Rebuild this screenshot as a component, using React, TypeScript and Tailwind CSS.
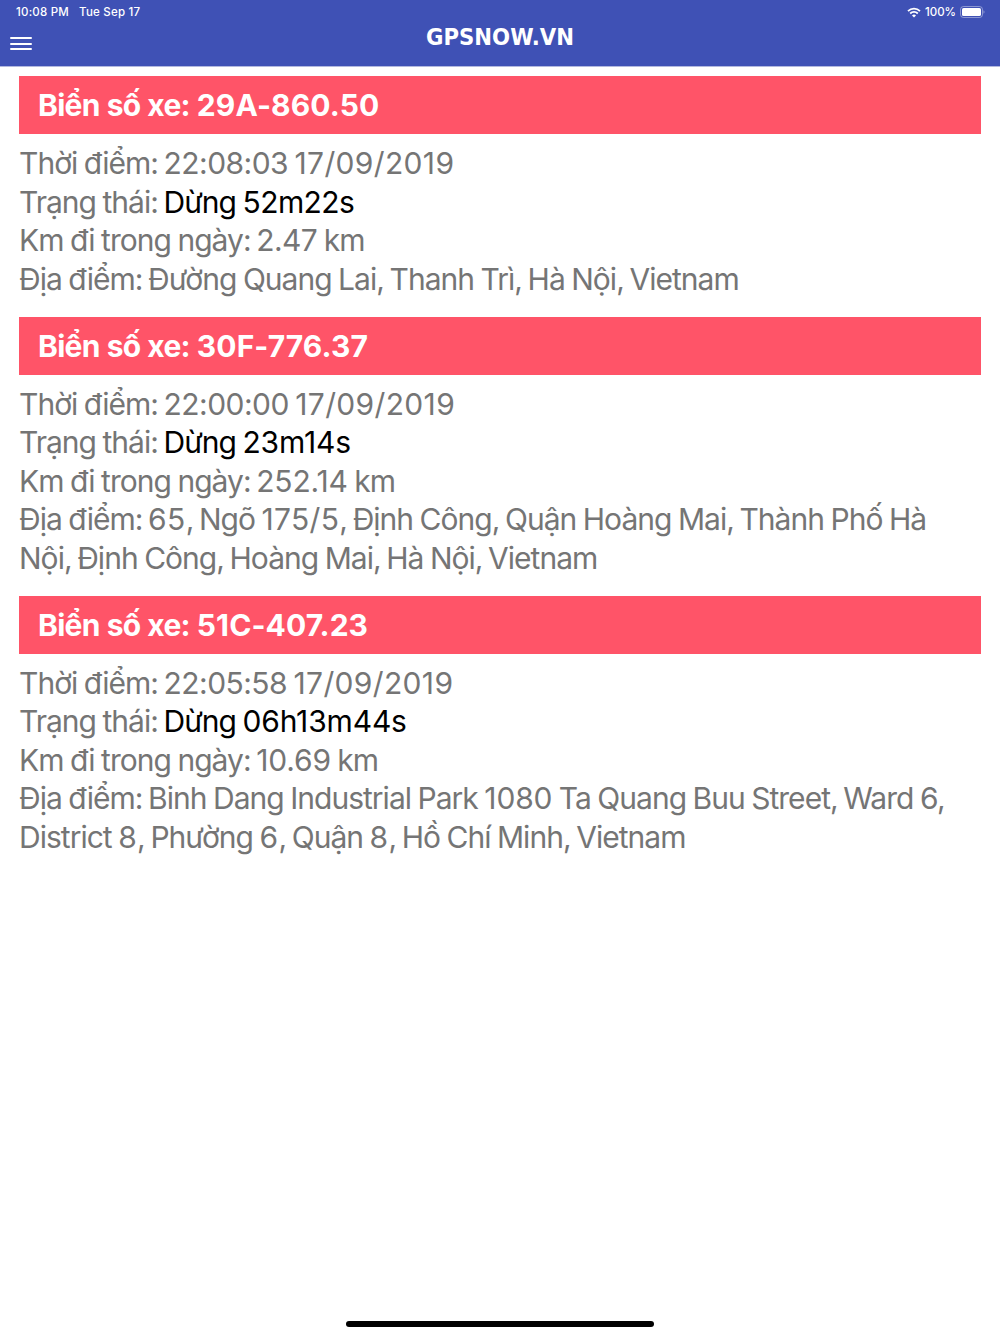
type Vehicle = {
  plate: string;
  time: string;
  status: string;
  distance: string;
  address: string[];
};

const vehicles: Vehicle[] = [
  {
    plate: "29A-860.50",
    time: "22:08:03 17/09/2019",
    status: "Dừng 52m22s",
    distance: "2.47 km",
    address: ["Địa điểm: Đường Quang Lai, Thanh Trì, Hà Nội, Vietnam"],
  },
  {
    plate: "30F-776.37",
    time: "22:00:00 17/09/2019",
    status: "Dừng 23m14s",
    distance: "252.14 km",
    address: [
      "Địa điểm: 65, Ngõ 175/5, Định Công, Quận Hoàng Mai, Thành Phố Hà",
      "Nội, Định Công, Hoàng Mai, Hà Nội, Vietnam",
    ],
  },
  {
    plate: "51C-407.23",
    time: "22:05:58 17/09/2019",
    status: "Dừng 06h13m44s",
    distance: "10.69 km",
    address: [
      "Địa điểm: Binh Dang Industrial Park 1080 Ta Quang Buu Street, Ward 6,",
      "District 8, Phường 6, Quận 8, Hồ Chí Minh, Vietnam",
    ],
  },
];

function StatusBar() {
  return (
    <div className="flex h-6 items-center justify-between pr-[15px] pl-4 text-[11.5px] font-medium">
      <div className="flex gap-[10px] pt-px tracking-[0.22px]">
        <span>10:08 PM</span>
        <span>Tue Sep 17</span>
      </div>
      <div className="flex items-center gap-1">
        <svg width="14" height="11" viewBox="0 0 14 11" fill="none" stroke="currentColor" strokeWidth="1.8">
          <path d="M1 4.2a8.5 8.5 0 0 1 12 0M3.2 6.5a5.4 5.4 0 0 1 7.6 0" />
          <path d="M7 10.5 5 8.4a2.8 2.8 0 0 1 4 0Z" fill="currentColor" stroke="none" />
        </svg>
        <span className="pt-px">100%</span>
        <svg width="25" height="12" viewBox="0 0 25 12" fill="none">
          <rect x="0.5" y="0.5" width="22" height="11" rx="3" stroke="currentColor" strokeOpacity="0.4" />
          <rect x="2" y="2" width="19" height="8" rx="1.6" fill="currentColor" />
          <path d="M23.5 4.3v3.4q1-.6 1-1.7t-1-1.7" fill="currentColor" fillOpacity="0.45" />
        </svg>
      </div>
    </div>
  );
}

// Tight gaps after punctuation, looser digits
function spacing(part: string) {
  if (/^[,:] $/.test(part)) return "tracking-[-1.4px]";
  if (part.includes("/") || /^\d{1,2}$/.test(part)) return "tracking-[0.35px]";
  if (part.includes("1")) return "tracking-[-0.15px]";
  if (/\d/.test(part)) return "tracking-[-0.55px]";
  return undefined;
}

function Words({ text }: { text: string }) {
  return text.split(/([,:]? )/).map((part, index) => (
    <span key={index} className={spacing(part)}>
      {part}
    </span>
  ));
}

function VehicleCard({ vehicle }: { vehicle: Vehicle }) {
  return (
    <section className="mb-[18.6px]">
      <h2 className="mb-[10px] flex h-[57.6px] items-center bg-[#ff5468] pt-px pl-[19px] text-[30px] font-bold whitespace-pre text-white">
        <span className="tracking-[-0.7px] [word-spacing:0.5px]">Biển số xe: </span>
        <span className="tracking-[0.1px]">{vehicle.plate}</span>
      </h2>
      <div className="text-[30px] leading-[38.6px] tracking-[-0.98px] whitespace-nowrap text-[#757575] [word-spacing:-1px]">
        <p>
          <Words text={`Thời điểm: ${vehicle.time}`} />
        </p>
        <p>
          <Words text="Trạng thái: " />
          <span className="text-black">
            <Words text={vehicle.status} />
          </span>
        </p>
        <p>
          <Words text={`Km đi trong ngày: ${vehicle.distance}`} />
        </p>
        {vehicle.address.map((line) => (
          <p key={line}>
            <Words text={line} />
          </p>
        ))}
      </div>
    </section>
  );
}

export default function App() {
  return (
    <div className="flex h-[1334px] w-[1000px] flex-col overflow-hidden bg-white font-['Inter',sans-serif]">
      <header className="h-[67px] border-b border-[#b2b8df] bg-[#3f51b5] text-white">
        <StatusBar />
        <div className="grid h-[42px] grid-cols-[1fr_auto_1fr] px-[10px]">
          <button aria-label="Menu" className="mt-[13px] flex h-[13px] w-[22px] flex-col justify-between">
            <span className="h-[2px] w-full rounded-full bg-white" />
            <span className="h-[2px] w-full rounded-full bg-white" />
            <span className="h-[2px] w-full rounded-full bg-white" />
          </button>
          <h1 className="font-['DejaVu_Sans_Condensed','DejaVu_Sans',sans-serif] text-[23.6px] leading-[26px] font-bold">
            GPSNOW.VN
          </h1>
        </div>
      </header>
      <main className="flex-1 px-[19px] pt-[9.4px]">
        {vehicles.map((vehicle) => (
          <VehicleCard key={vehicle.plate} vehicle={vehicle} />
        ))}
      </main>
      <div className="mx-auto mb-[7px] h-[6px] w-[308px] rounded-full bg-black" />
    </div>
  );
}
